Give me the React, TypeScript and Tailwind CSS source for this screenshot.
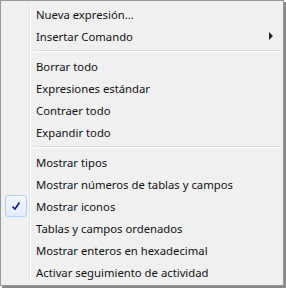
import React from "react";

type Item =
  | { kind: "item"; label: string; checked?: boolean; submenu?: boolean }
  | { kind: "sep" };

const ITEMS: Item[] = [
  { kind: "item", label: "Nueva expresión..." },
  { kind: "item", label: "Insertar Comando", submenu: true },
  { kind: "sep" },
  { kind: "item", label: "Borrar todo" },
  { kind: "item", label: "Expresiones estándar" },
  { kind: "item", label: "Contraer todo" },
  { kind: "item", label: "Expandir todo" },
  { kind: "sep" },
  { kind: "item", label: "Mostrar tipos" },
  { kind: "item", label: "Mostrar números de tablas y campos" },
  { kind: "item", label: "Mostrar iconos", checked: true },
  { kind: "item", label: "Tablas y campos ordenados" },
  { kind: "item", label: "Mostrar enteros en hexadecimal" },
  { kind: "item", label: "Activar seguimiento de actividad" },
];

export default function App() {
  return (
    <div className="w-[286px] h-[288px] bg-white font-['Noto_Sans',sans-serif] text-[11.3px] text-[#111]">
      <div className="w-[284px] h-[286px] border border-[#979797] bg-[#f0f0f0] p-[2px] shadow-[2px_2px_0_#8a8a8a]">
        <div className="h-full bg-[linear-gradient(to_right,transparent_26px,#e2e3e3_26px,#e2e3e3_27px,#ffffff_27px,#ffffff_28px,transparent_28px)]">
          {ITEMS.map((it, i) =>
            it.kind === "sep" ? (
              <div key={i} className="h-[8px] pl-[30px] pr-[1px] flex flex-col justify-center">
                <div className="h-[1px] bg-[#e0e0e0]" />
                <div className="h-[1px] bg-white" />
              </div>
            ) : (
              <div key={i} className="h-[22px] flex items-center relative">
                <div className="w-[26px] h-full flex items-center justify-center">
                  {it.checked && (
                    <div className="w-[22px] h-[22px] rounded-[3px] border border-[#aecff7] bg-[linear-gradient(#f2f6fc,#e3ebf7)] flex items-center justify-center">
                      <svg width="10" height="10" viewBox="0 0 10 10">
                        <path d="M1.5 5.5 L4 8 L8.5 1.5" stroke="#0c1a7a" strokeWidth="1.6" fill="none" />
                      </svg>
                    </div>
                  )}
                </div>
                <span className="pl-[7px] pt-[2px] leading-none">{it.label}</span>
                {it.submenu && (
                  <svg className="absolute left-[266px] top-[7px]" width="4" height="8" viewBox="0 0 4 8">
                    <path d="M0 0 L4 4 L0 8 Z" fill="#222" />
                  </svg>
                )}
              </div>
            )
          )}
        </div>
      </div>
    </div>
  );
}
